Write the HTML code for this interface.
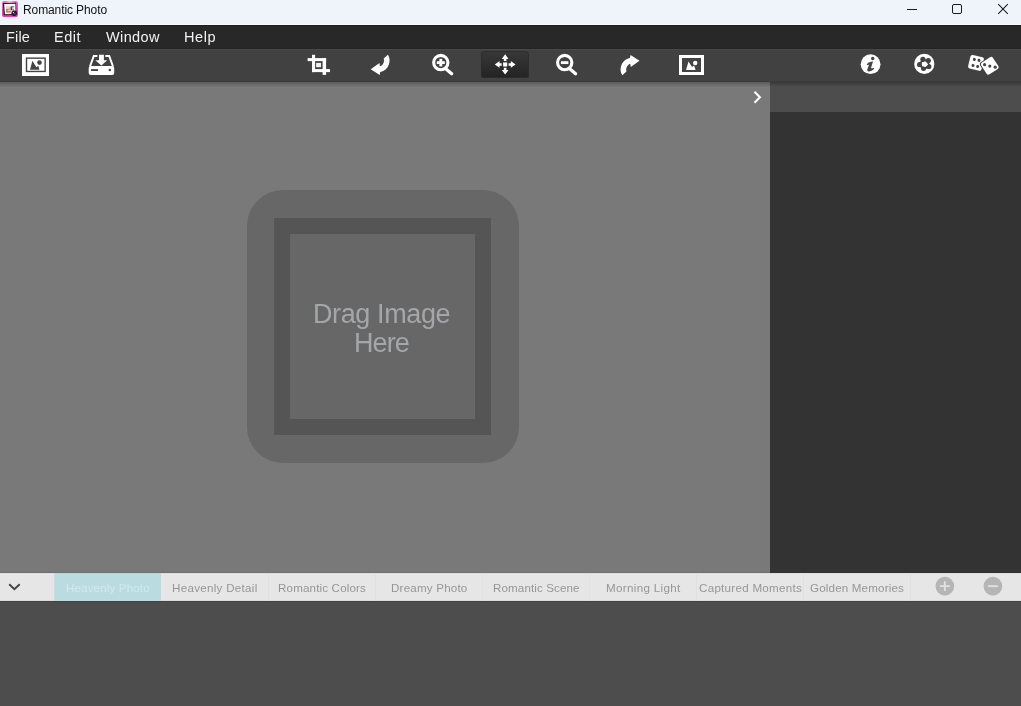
<!DOCTYPE html>
<html>
<head>
<meta charset="utf-8">
<title>Romantic Photo</title>
<style>
*{box-sizing:border-box;margin:0;padding:0}
html,body{width:1021px;height:706px;overflow:hidden;background:#4d4d4d;font-family:"Liberation Sans",sans-serif;}
#win{position:relative;width:1021px;height:706px;overflow:hidden}
.abs{position:absolute}
.t{position:absolute;white-space:nowrap;line-height:1.15}
.g{will-change:transform}
#title{left:0;top:0;width:1021px;height:24px;background:#eff3fa}
#titlehl{left:0;top:24px;width:1021px;height:1px;background:#f9fbfe}
#menu{left:0;top:25px;width:1021px;height:24px;background:#282828;border-top:1px solid #1d1d1d;border-bottom:1px solid #252525}
#tool{left:0;top:49px;width:1021px;height:33px;background:#414141;border-top:1px solid #484848;border-bottom:1px solid #3b3b3b}
#canvas{left:0;top:82px;width:770px;height:491px;background:#797979}
#canvsh{left:0;top:82px;width:770px;height:5px;background:linear-gradient(#595959,#797979)}
#canvbt{left:0;top:572px;width:770px;height:1px;background:#707070}
#rhead{left:770px;top:82px;width:251px;height:30px;background:#4d4d4d}
#rheadsh{left:770px;top:82px;width:251px;height:5px;background:linear-gradient(#393939,#4d4d4d)}
#rbody{left:770px;top:112px;width:251px;height:461px;background:#333333}
#tabs{left:0;top:573px;width:1021px;height:28px;background:#e6e6e6;border-top:1px solid #dedede;border-bottom:1px solid #dcdcdc}
#bottom{left:0;top:601px;width:1021px;height:105px;background:#4d4d4d;border-top:1px solid #424242}
.tab{position:absolute;top:573px;height:28px;width:107px;border-left:1px solid #e0e0e0}
.tab.act{background:#badce1;border-left:1px solid #c2e0e4;border-top:1px solid #b4d5da}
#dz1{left:246.5px;top:190.4px;width:272px;height:272.2px;border-radius:36px;background:#676767}
#dz2{left:274px;top:218px;width:217px;height:216.7px;background:#555555}
#dz3{left:290px;top:234px;width:184.6px;height:185px;background:#676767}
svg{position:absolute;left:0;top:0;overflow:visible}
</style>
</head>
<body>
<div id="win">
<div id="title" class="abs"></div>
<div id="titlehl" class="abs"></div>
<div id="menu" class="abs"></div>
<div id="tool" class="abs"></div>
<div id="canvas" class="abs"></div>
<div id="canvsh" class="abs"></div>
<div id="canvbt" class="abs"></div>
<div id="rhead" class="abs"></div>
<div id="rheadsh" class="abs"></div>
<div id="rbody" class="abs"></div>
<div id="dz1" class="abs"></div>
<div id="dz2" class="abs"></div>
<div id="dz3" class="abs"></div>
<div id="tabs" class="abs"></div>
<div class="tab act" style="left:54px"></div>
<div class="tab" style="left:161px;border-left:none"></div>
<div class="tab" style="left:268px"></div>
<div class="tab" style="left:375px"></div>
<div class="tab" style="left:482px"></div>
<div class="tab" style="left:589px"></div>
<div class="tab" style="left:696px"></div>
<div class="tab" style="left:803px"></div>
<div class="tab" style="left:910px;width:1px"></div>
<div id="bottom" class="abs"></div>
<div class="t g" id="tt" style="left:23.00px;top:4.00px;font-size:12px;letter-spacing:-0.100px;color:#111">Romantic Photo</div>
<div class="t g" id="m1" style="left:6.00px;top:29.00px;font-size:14.5px;letter-spacing:0.190px;color:#f2f2f2">File</div>
<div class="t g" id="m2" style="left:54.00px;top:29.00px;font-size:14.5px;letter-spacing:0.500px;color:#f2f2f2">Edit</div>
<div class="t g" id="m3" style="left:106.00px;top:29.00px;font-size:14.5px;letter-spacing:0.361px;color:#f2f2f2">Window</div>
<div class="t g" id="m4" style="left:184.00px;top:29.00px;font-size:14.5px;letter-spacing:0.546px;color:#f2f2f2">Help</div>
<div class="t g" id="d1" style="left:313.00px;top:299.00px;font-size:27px;letter-spacing:-0.386px;color:#a4a6a9">Drag Image</div>
<div class="t g" id="d2" style="left:354.00px;top:328.00px;font-size:27px;letter-spacing:-0.912px;color:#a4a6a9">Here</div>
<div class="t g" id="b1" style="left:66.00px;top:581.00px;font-size:11.6px;letter-spacing:0.136px;color:#d2e9ed">Heavenly Photo</div>
<div class="t g" id="b2" style="left:172.00px;top:581.00px;font-size:11.6px;letter-spacing:0.294px;color:#969696">Heavenly Detail</div>
<div class="t g" id="b3" style="left:278.00px;top:581.00px;font-size:11.6px;letter-spacing:0.159px;color:#969696">Romantic Colors</div>
<div class="t g" id="b4" style="left:391.00px;top:581.00px;font-size:11.6px;letter-spacing:0.201px;color:#969696">Dreamy Photo</div>
<div class="t g" id="b5" style="left:493.00px;top:581.00px;font-size:11.6px;letter-spacing:0.116px;color:#969696">Romantic Scene</div>
<div class="t g" id="b6" style="left:606.00px;top:581.00px;font-size:11.6px;letter-spacing:0.332px;color:#969696">Morning Light</div>
<div class="t g" id="b7" style="left:699.00px;top:581.00px;font-size:11.6px;letter-spacing:0.280px;color:#969696">Captured Moments</div>
<div class="t g" id="b8" style="left:810.00px;top:581.00px;font-size:11.6px;letter-spacing:0.165px;color:#969696">Golden Memories</div>
<svg id="icons" width="1021" height="706" viewBox="0 0 1021 706">
<!-- app icon -->
<defs>
<radialGradient id="pk" cx="0.5" cy="0.12" r="0.75"><stop offset="0" stop-color="#fcd6f0"/><stop offset="0.4" stop-color="#ee6cc8"/><stop offset="1" stop-color="#de44b2"/></radialGradient>
<radialGradient id="ln" cx="0.45" cy="0.4" r="0.6"><stop offset="0" stop-color="#7a3f9a"/><stop offset="0.6" stop-color="#2a1040"/><stop offset="1" stop-color="#120818"/></radialGradient>
<linearGradient id="pb" x1="0" y1="0" x2="0" y2="1"><stop offset="0" stop-color="#383838"/><stop offset="1" stop-color="#232323"/></linearGradient>
</defs>
<rect x="2" y="1" width="16" height="16" rx="2.6" fill="url(#pk)"/>
<path d="M3.0 3.1 L16.1 2.7 L16.3 14.9 L3.8 15.2Z" fill="#1a1216"/>
<path d="M4.15 4.1 L15.4 3.7 L15.55 13.9 L4.9 14.15Z" fill="#ffffff"/>
<rect x="5.95" y="5.95" width="7.95" height="6.55" fill="#ecd6bd"/>
<rect x="10.4" y="5.95" width="3.5" height="6.55" fill="#f0d3d8"/>
<rect x="11.9" y="5.95" width="2" height="1.3" fill="#4f93a3"/>
<rect x="10.6" y="6.6" width="1.6" height="3.6" fill="#5a3a48"/>
<rect x="6" y="9.1" width="2.6" height="1" fill="#e0506e"/>
<rect x="6.4" y="10" width="1.2" height="0.9" fill="#79a65a"/>
<rect x="8.9" y="8.6" width="1.2" height="0.9" fill="#e45a78"/>
<rect x="6" y="11.1" width="4.8" height="1.3" fill="#e64f78"/>
<rect x="12.6" y="9" width="1.2" height="1.6" fill="#d8405f"/>
<circle cx="14.2" cy="13.2" r="2.7" fill="#1b0d26"/>
<circle cx="14.2" cy="13.2" r="1.9" fill="#3a1a55"/>
<circle cx="14.1" cy="13.5" r="0.8" fill="#c8305e"/>
<circle cx="14.9" cy="14.1" r="0.7" fill="#4444a8"/>
<circle cx="13.4" cy="12.4" r="0.55" fill="#e8dff0"/>

<!-- window controls -->
<rect x="907" y="9" width="10" height="1" fill="#1a1a1a"/>
<rect x="952.5" y="4.5" width="9" height="9" rx="1.5" fill="none" stroke="#1a1a1a" stroke-width="1"/>
<path d="M998.2 4.2 L1007.8 13.8 M1007.8 4.2 L998.2 13.8" stroke="#1a1a1a" stroke-width="1.05" fill="none"/>

<!-- icon1: open image -->
<rect x="22" y="54" width="27" height="22" fill="#fff"/>
<rect x="26.5" y="58.15" width="18.65" height="13.3" fill="#fff" stroke="#444" stroke-width="1.4"/>
<path d="M30 69.8 L32.4 60.8 L36.4 67.2 L38.4 65.8 L39.4 69.8Z" fill="#444"/>
<circle cx="39.5" cy="62.6" r="2.3" fill="#444"/>

<!-- icon2: save -->
<path d="M90 66.5 L93.8 56 L97.4 56 M105.3 56 L109.2 56 L113 66.5" fill="none" stroke="#fff" stroke-width="2.0" stroke-linejoin="miter"/>
<rect x="88.7" y="66" width="25.5" height="9" rx="2" fill="#fff"/>
<path d="M99 54.8 H103.9 V60.2 H107.2 L101.4 65.6 L95.3 60.2 H99Z" fill="#fff"/>
<rect x="91" y="69.1" width="7" height="1.9" fill="#444"/>
<circle cx="109.8" cy="69.9" r="1.25" fill="#444"/>

<!-- icon3: crop -->
<rect x="312" y="54.8" width="3.1" height="17.3" fill="#fff"/>
<rect x="307.6" y="58.1" width="18.5" height="3" fill="#fff"/>
<rect x="322.6" y="58.1" width="3.5" height="16.8" fill="#fff"/>
<rect x="312" y="69.1" width="18" height="3" fill="#fff"/>
<rect x="316.1" y="62.9" width="4.9" height="4.3" fill="#f2f2f2"/>

<!-- icon4: rotate left -->
<path d="M387.9 54.8 C390 58 390.6 63 387.2 67.7 C385 70.5 382.6 71.5 380.2 71.9 L379.7 74.9 L370.7 69.3 L379.5 63 L379.9 66.3 C382.2 65.6 384.9 62.6 383.7 58.4 Z" fill="#fff"/>

<!-- icon5: zoom in -->
<circle cx="440.8" cy="62.55" r="7.15" fill="none" stroke="#fff" stroke-width="3.1"/>
<path d="M446.3 69.3 L451.7 73.8" stroke="#fff" stroke-width="3.3" stroke-linecap="round"/>
<rect x="436.8" y="61.2" width="8" height="2.85" fill="#fff"/>
<rect x="439.35" y="58.8" width="2.9" height="7.6" fill="#fff"/>

<!-- icon6: move, pressed -->
<rect x="481" y="51" width="48" height="27" rx="3.5" fill="url(#pb)"/>
<rect x="481.5" y="51.5" width="47" height="26" rx="3" fill="none" stroke="#2c2c2c" stroke-width="1"/>
<g fill="#fff">
<rect x="503.1" y="62.4" width="4.1" height="4.1"/>
<path d="M505.15 54.3 L508.5 59 H506.45 V61.1 H503.85 V59 H501.8Z"/>
<path d="M505.15 74.6 L508.5 69.9 H506.45 V67.8 H503.85 V69.9 H501.8Z"/>
<path d="M494.8 64.45 L499.5 61.1 V63.15 H501.7 V65.75 H499.5 V67.8Z"/>
<path d="M515.5 64.45 L510.8 61.1 V63.15 H508.6 V65.75 H510.8 V67.8Z"/>
</g>

<!-- icon7: zoom out -->
<circle cx="564.7" cy="62.55" r="7.15" fill="none" stroke="#fff" stroke-width="3.1"/>
<path d="M570.2 69.3 L575.6 73.8" stroke="#fff" stroke-width="3.3" stroke-linecap="round"/>
<rect x="560.9" y="61.2" width="7.5" height="2.85" fill="#fff"/>

<!-- icon8: rotate right -->
<path d="M387.9 54.8 C390 58 390.6 63 387.2 67.7 C385 70.5 382.6 71.5 380.2 71.9 L379.7 74.9 L370.7 69.3 L379.5 63 L379.9 66.3 C382.2 65.6 384.9 62.6 383.7 58.4 Z" fill="#fff" transform="rotate(180 505.1 65)"/>

<!-- icon9: image -->
<rect x="680.5" y="56.5" width="22" height="17" fill="#444" stroke="#fff" stroke-width="3"/>
<path d="M686 69.9 L688.5 61.4 L692 66.9 L694.1 65.5 L695.6 69.9Z" fill="#fff"/>
<circle cx="695.2" cy="63" r="2.2" fill="#fff"/>

<!-- info -->
<circle cx="870.6" cy="64.15" r="9.9" fill="#fff"/>
<circle cx="872.7" cy="58.5" r="1.7" fill="#444"/>
<path d="M866.8 64.3 C868.3 62.6 870.6 61.5 873.0 61.6 L870.9 68.2 C871.6 68.6 872.8 68.2 873.6 67.8 L874.1 68.8 C872.4 70.6 870.2 71.7 868.5 71.5 C867.5 71.3 867.0 70.5 867.3 69.6 L869.0 64.7 C868.5 64.5 867.9 64.8 867.3 65.2 Z" fill="#444"/>

<!-- flower -->
<circle cx="924.3" cy="63.9" r="10.1" fill="#fff"/>
<g fill="#444">
<circle cx="922.9" cy="59.3" r="2.6"/>
<circle cx="928.3" cy="60.6" r="2.6"/>
<circle cx="928.8" cy="66.5" r="2.6"/>
<circle cx="923.6" cy="68.3" r="2.6"/>
<circle cx="919.6" cy="64.5" r="2.6"/>
</g>
<circle cx="924.5" cy="64.2" r="4.0" fill="none" stroke="#444" stroke-width="2.1"/>
<path d="M922 62.2 L925.6 61.9 L928.1 64.4 L925.3 67 L922.4 66.3 L921.7 64.2Z" fill="#fff"/>

<!-- dice -->
<g transform="rotate(13.8 976 62.9)">
<rect x="969.1" y="56" width="13.8" height="13.8" rx="2" fill="#fff"/>
<g fill="#444"><circle cx="973.6" cy="59.9" r="1.52"/><circle cx="978.3" cy="59.7" r="1.52"/><circle cx="973.7" cy="66.1" r="1.52"/><circle cx="978.5" cy="66" r="1.52"/></g>
</g>
<g transform="rotate(-33 989.8 65.8)">
<rect x="981.9" y="57.9" width="15.8" height="15.8" rx="2.6" fill="#444"/>
<rect x="982.8" y="58.8" width="14" height="14" rx="2.1" fill="#fff"/>
</g>
<g fill="#444"><circle cx="984.6" cy="64.65" r="1.58"/><circle cx="989.8" cy="66.05" r="1.58"/><circle cx="995.2" cy="67.2" r="1.58"/></g>

<!-- chevrons -->
<path d="M754.5 91.7 L759.9 97.2 L754.5 102.7" fill="none" stroke="#fff" stroke-width="2.1"/>
<path d="M9.2 584.3 L14.4 589.3 L19.7 584.3" fill="none" stroke="#444" stroke-width="1.9"/>

<!-- plus/minus -->
<circle cx="944.85" cy="586.15" r="9.3" fill="#b5b5b5"/>
<path d="M939.9 586.15 H949.8 M944.85 581.2 V591.1" stroke="#e0e0e0" stroke-width="1.9"/>
<circle cx="992.9" cy="586.15" r="9.3" fill="#b5b5b5"/>
<path d="M987.9 586.15 H997.9" stroke="#e0e0e0" stroke-width="1.9"/>

</svg>

</div>
</body>
</html>
